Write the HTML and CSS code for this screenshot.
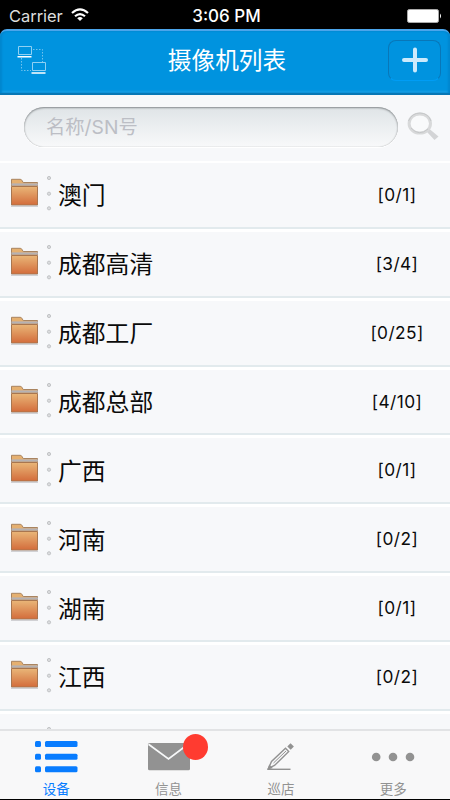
FILE: index.html
```html
<!DOCTYPE html>
<html lang="zh-CN">
<head>
<meta charset="utf-8">
<title>摄像机列表</title>
<link rel="stylesheet" href="styles.css">
</head>
<body>
<svg class="defs" aria-hidden="true">
  <defs>
    <linearGradient id="folder-fill" x1="0" y1="0" x2="0" y2="1">
      <stop offset="0" stop-color="#e9b678"/>
      <stop offset="1" stop-color="#d36c3b"/>
    </linearGradient>
    <symbol id="folder" viewBox="0 0 30 30">
      <path d="M1.5 9V2.3h8.7q1.300 0 2 1.500l1 1.700H27.500V9z" fill="#e5b070" stroke="#a98460"/>
      <path d="M1.500 7.500H28" stroke="#b5b1b3" stroke-width="2.200"/>
      <path d="M1.500 9.500H27.500V28H1.500z" fill="url(#folder-fill)" stroke="#a9764f"/>
      <path d="M1 29.100H28" stroke="#b8b8ba"/>
    </symbol>
    <symbol id="rings" viewBox="0 0 6 36">
      <g fill="#dcdddf" stroke="#c3c5c7">
        <circle cx="3" cy="3" r="1.600"/>
        <circle cx="3" cy="18.700" r="1.600"/>
        <circle cx="3" cy="33.300" r="1.600"/>
      </g>
    </symbol>
  </defs>
</svg>
<div class="app">
  <div class="status">
    <div class="carrier"><span>Carrier</span>
      <svg width="18" height="14" viewBox="0 0 18 14" fill="none" stroke="#fff" stroke-width="2.200"><path d="M1 5Q9-2.200 17 5M4 8.300Q9 3.800 14 8.300"/><path d="M9 13L6.200 10.300Q9 7.900 11.800 10.300z" fill="#fff" stroke="none"/></svg>
    </div>
    <div class="time">3:06 PM</div>
    <svg class="battery" width="35" height="14" viewBox="0 0 35 14"><rect x=".5" y=".5" width="31" height="13" rx="1.800" fill="#fff" stroke="#aaa"/><path d="M33 4.500q2 2.500 0 5z" fill="#fff"/></svg>
  </div>
  <header class="navbar">
    <svg class="network" width="30" height="30" viewBox="0 0 30 30" fill="none">
      <g stroke="#8fd0f3"><path d="M1.500 1.500h13v8h-13zM15.500 17.500h13v8h-13z"/><path d="M16 4.500h9.500V17M4.500 13v12.500H14" stroke-dasharray="1.500 1.500" stroke="#72c3ee"/></g>
      <path d="M.5 11.700h14M14.500 28h14" stroke="#fff" stroke-width="1.500"/>
    </svg>
    <h1>摄像机列表</h1>
    <div class="add"><svg width="26" height="26" viewBox="0 0 26 26"><path d="M13 2.500v21M2 13h22" stroke="#cceafc" stroke-width="4" stroke-linecap="round"/></svg></div>
  </header>
  <div class="search">
    <div class="field">名称/SN号</div>
    <svg class="magnifier" width="32" height="30" viewBox="0 0 32 30" fill="none"><path d="M19.500 19.500l3-2.500 9 7.500-4 3.500z" fill="#d3d4d6"/><ellipse cx="12.800" cy="11.500" rx="10.700" ry="9.600" stroke="#d8d9da" stroke-width="3" fill="#f9fafb"/><path d="M1.500 9Q5 1 13 1T24 9M4 16q8 9 17 1" stroke="#bfc1c3" stroke-width=".8"/></svg>
  </div>
  <main class="list">
    <div class="row"><svg class="folder"><use href="#folder"/></svg><svg class="rings"><use href="#rings"/></svg><span class="name">澳门</span><span class="count">[0/1]</span></div>
    <div class="row"><svg class="folder"><use href="#folder"/></svg><svg class="rings"><use href="#rings"/></svg><span class="name">成都高清</span><span class="count">[3/4]</span></div>
    <div class="row"><svg class="folder"><use href="#folder"/></svg><svg class="rings"><use href="#rings"/></svg><span class="name">成都工厂</span><span class="count">[0/25]</span></div>
    <div class="row"><svg class="folder"><use href="#folder"/></svg><svg class="rings"><use href="#rings"/></svg><span class="name">成都总部</span><span class="count">[4/10]</span></div>
    <div class="row"><svg class="folder"><use href="#folder"/></svg><svg class="rings"><use href="#rings"/></svg><span class="name">广西</span><span class="count">[0/1]</span></div>
    <div class="row"><svg class="folder"><use href="#folder"/></svg><svg class="rings"><use href="#rings"/></svg><span class="name">河南</span><span class="count">[0/2]</span></div>
    <div class="row"><svg class="folder"><use href="#folder"/></svg><svg class="rings"><use href="#rings"/></svg><span class="name">湖南</span><span class="count">[0/1]</span></div>
    <div class="row"><svg class="folder"><use href="#folder"/></svg><svg class="rings"><use href="#rings"/></svg><span class="name">江西</span><span class="count">[0/2]</span></div>
    <div class="row"><svg class="folder"></svg><svg class="rings"><use href="#rings"/></svg></div>
  </main>
  <nav class="tabs">
    <div class="tab active">
      <svg width="44" height="34" viewBox="0 0 44 34" fill="currentColor"><rect x="1" y="1" width="6" height="6" rx="1.500"/><rect x="11" y="1" width="32.500" height="6" rx="1.500"/><rect x="1" y="13.700" width="6" height="6" rx="1.500"/><rect x="11" y="13.700" width="32.500" height="6" rx="1.500"/><rect x="1" y="26.300" width="6" height="6" rx="1.500"/><rect x="11" y="26.300" width="32.500" height="6" rx="1.500"/></svg>
      <span>设备</span>
    </div>
    <div class="tab">
      <svg width="44" height="34" viewBox="0 0 44 34"><rect x="1" y="3" width="42" height="27.300" rx="1.500" fill="currentColor"/><path d="M1.500 4.200L21.500 19 42 3.500" fill="none" stroke="#f7f8f9" stroke-width="1.700"/></svg>
      <span>信息</span><i class="badge"></i>
    </div>
    <div class="tab">
      <svg width="44" height="34" viewBox="0 0 44 34" fill="none" stroke="currentColor" stroke-width="1.400"><path d="M8.500 29.300H31.500"/><path d="M9.500 28.300L12.500 21.500 26.500 8.200 29.700 11.500 15.500 25.500z"/><path d="M14.500 23L27 11" stroke-width="1"/><path d="M28.300 6.500l3.200-3.300 3.400 3.400-3.200 3.200z" fill="currentColor" stroke="none"/><path d="M9.500 28.700l1-3 2 2z" fill="currentColor"/></svg>
      <span>巡店</span>
    </div>
    <div class="tab">
      <svg width="44" height="34" viewBox="0 0 44 34" fill="currentColor"><circle cx="5.200" cy="17" r="4.300"/><circle cx="22" cy="17" r="4.300"/><circle cx="39" cy="17" r="4.300"/></svg>
      <span>更多</span>
    </div>
  </nav>
</div>
</body>
</html>
```
FILE: styles.css
```css
* { box-sizing: border-box; }
body { margin: 0; background: #000; font-family: Inter, "Noto Sans CJK SC", sans-serif; }
svg { display: block; flex: none; }
.defs { position: absolute; width: 0; height: 0; }
.app { width: 450px; height: 800px; display: flex; flex-direction: column; overflow: hidden; border-bottom: 1px solid #000; }
.status { flex: none; height: 29px; padding: 2px 8px 0 9px; display: grid; grid-template-columns: 1fr auto 1fr; align-items: center; color: #fff; font-size: 16.500px; }
.carrier { display: flex; align-items: center; gap: 8px; color: #ddd; letter-spacing: -.05px; }
.carrier svg { margin-top: -2px; }
.time { margin-left: 2px; font-size: 17px; font-weight: 500; letter-spacing: 0; }
.battery { justify-self: end; }
.navbar { flex: none; height: 66px; padding: 0 9px 4px 17px; display: grid; grid-template-columns: 1fr auto 1fr; align-items: center; background: #0093df; border-top: 2px solid #4ba5eb; border-bottom: 2px solid #0877b5; border-radius: 7px 7px 0 0; box-shadow: inset 2px 0 2px #0086ce, inset -2px 0 2px #0086ce, inset 0 -2px 2px #1da0e5; }
.navbar h1 { margin: 1px 4px 0 0; color: #fff; font-size: 23.700px; line-height: 36px; font-weight: 400; }
.add { justify-self: end; width: 53px; height: 41px; margin-top: 0; border: 1px solid #0877b8; border-bottom-color: #009df5; border-radius: 8px; display: flex; align-items: center; justify-content: center; }
.search { flex: none; height: 68px; padding: 12px 10px 0 24px; background: #f7f8fa; border-bottom: 2px solid #fff; display: flex; align-items: flex-start; gap: 9px; }
.field { width: 374px; height: 40px; padding-left: 22px; border-radius: 20px; background: linear-gradient(#dfe4e7, #f8f9fa); box-shadow: inset 0 1px 2px #858a8d, inset 0 0 1px #bbb, 0 1px 1px #fff; color: #bcbec5; font-size: 19.300px; line-height: 40px; }
.magnifier { margin-top: 5px; }
.list { flex: 1; min-height: 0; overflow: hidden; background: #f7f8fa; }
.row { height: 68.860px; border-bottom: 3px solid #fff; box-shadow: inset 0 -2px #e2eaed; display: flex; align-items: center; color: #0a0a0a; }
.folder { width: 30px; height: 30px; margin: -7px 0 0 9.500px; }
.rings { width: 6px; height: 36px; margin: -5px 0 0 6px; }
.name { margin: 1px 0 0 6.500px; font-size: 23.800px; line-height: 36px; }
.count { width: 80px; margin: -3px 13px 0 auto; text-align: center; font-size: 17.300px; letter-spacing: .4px; }
.tabs { flex: none; height: 70px; background: #f8f8f9; border-top: 2px solid #e2e3e5; display: grid; grid-template-columns: repeat(4, 112.400px); }
.tab { position: relative; display: flex; flex-direction: column; align-items: center; padding-top: 9px; color: #929292; font-size: 13.500px; line-height: 20px; }
.tab span { margin-top: 5px; }
.active { color: #087cff; }
.badge { position: absolute; left: 71px; top: 3px; width: 25px; height: 26px; border-radius: 50%; background: #ff3b30; }
```
